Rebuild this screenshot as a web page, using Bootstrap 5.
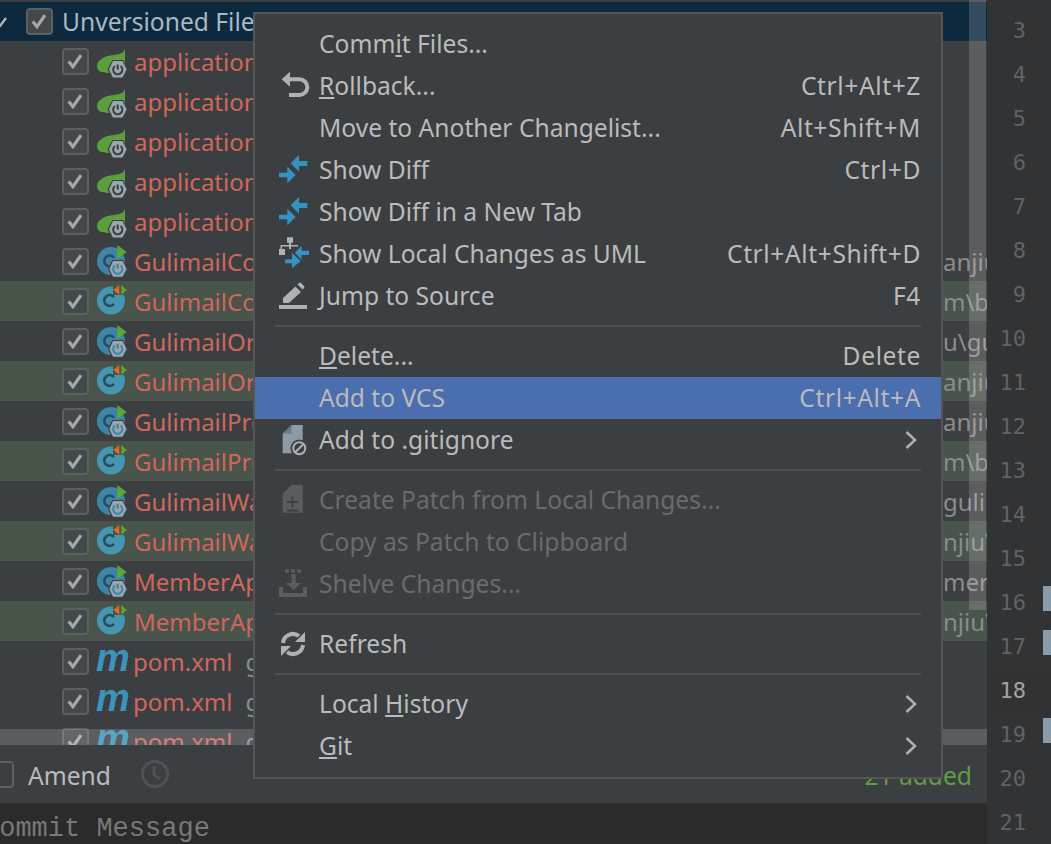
<!DOCTYPE html>
<html lang="en">
<head>
  <meta charset="UTF-8" />
  <meta name="viewport" content="width=device-width, initial-scale=1" />
  <title>Commit Changes</title>
  <link href="https://cdn.jsdelivr.net/npm/bootstrap@5.3.0/dist/css/bootstrap.min.css" rel="stylesheet" />
  <style>
    body { width: 1051px; height: 844px; overflow: hidden; background: #3c3f41; color: #bbb; font-family: "Noto Sans", sans-serif; font-size: 24px; }
    .ide { height: 844px; }
    .left-pane { width: 987px; }
    .tree { height: 745px; margin: 0; }
    .tree-head { height: 39px; margin-top: 2px; background: #0d293e; color: #a9b7c6; white-space: nowrap; font-size: 24.6px; }
    .tree-arrow { width: 8px; height: 39px; margin-right: 18px; flex: none; }
    .head-label { width: 192px; margin-left: 9px; overflow: hidden; padding-top: 1px; }
    .tree-row { height: 40px; padding-left: 62px; white-space: nowrap; }
    .tree-row.changed { background: #49544a; }
    .file-icon { width: 30px; height: 40px; margin: 0 7px 0 8px; flex: none; overflow: visible; }
    .file-name { color: #d1675a; padding-top: 2px; max-width: 120px; overflow: hidden; }
    .file-hint { color: #8c8c8c; margin-left: 13px; padding-top: 2px; width: 10px; overflow: hidden; }
    .file-path { color: #8c8c8c; position: absolute; left: 943px; width: 44px; overflow: hidden; padding-top: 2px; }
    .maven-m { width: 30px; margin: -6px 7px 0 7px; flex: none; color: #3a94bb; font: italic bold 38px/40px "Liberation Sans", sans-serif; }
    .form-check-input.ide-check { width: 27px; height: 27px; margin: 0; flex: none; background-color: #43494a; border: 2px solid #5e6060; border-radius: 4px; background-size: 100%; box-shadow: none;
      background-image: url("data:image/svg+xml,%3csvg xmlns='http://www.w3.org/2000/svg' viewBox='0 0 27 27'%3e%3cpath fill='none' stroke='%23a7a7a7' stroke-width='3.8' d='M5.500 13.500l5 6 9.500-13.500'/%3e%3c/svg%3e"); }
    .form-check-input.ide-check.blank { background-image: none; background-color: #3c3f41; margin-left: -13px; }
    .h-scroll { position: absolute; left: 0; top: 729px; width: 987px; height: 16px; background: rgba(255,255,255,.16); }
    .v-scroll { position: absolute; left: 969px; top: 0; width: 17px; height: 610px; background: rgba(255,255,255,.16); }
    .amend-row { height: 58px; font-size: 24.6px; }
    .amend-label { margin-left: 14px; padding-top: 4px; }
    .added-count { color: #5f9e45; margin-right: 15px; padding-top: 4px; }
    .clock-icon { width: 30px; height: 30px; margin-left: 29px; }
    .msg-box { flex: 1; background: #2b2b2b; border-top: 1px solid #323232; color: #787878; font: 27px/50px "Liberation Mono", monospace; white-space: nowrap; overflow: hidden; }
    .msg-box span { margin-left: -17px; display: block; }
    .gutter { width: 64px; background: #313335; padding-top: 9px; color: #606366; font: 22px/44px "DejaVu Sans Mono", monospace; }
    .gutter-line { height: 44px; padding-right: 25px; position: relative; text-align: right; }
    .gutter-line.current { background: #323232; color: #a4a3a3; }
    .gutter-line.modified::after { content: ""; position: absolute; right: 0; top: 5px; width: 8px; height: 25px; background: #8b9ba8; }
    .ctx-menu.dropdown-menu { position: absolute; left: 253px; top: 12px; width: 690px; height: 767px; margin: 0; padding: 9px 0; background: #3c3f41; border: 2px solid #555; border-radius: 0; font-size: 24.6px; }
    .ctx-menu .dropdown-item { height: 42px; padding: 0 20px 0 23px; color: #bbb; display: flex; align-items: center; }
    .ctx-menu .dropdown-item.active { background: #4b6eaf; color: #bbb; }
    .ctx-menu .dropdown-item.disabled { color: #696b6d; }
    .ctx-menu .dropdown-divider { margin: 8px 20px 8px 20px; border-top: 2px solid #515151; opacity: 1; }
    .menu-icon { width: 30px; height: 30px; margin-right: 11px; flex: none; overflow: visible; }
    .menu-gap { width: 30px; margin-right: 11px; flex: none; }
    .menu-key { margin-left: auto; letter-spacing: .6px; }
    .menu-sub { margin-left: auto; width: 12px; height: 20px; margin-right: 4px; }
  </style>
</head>
<body>

<svg width="0" height="0" class="position-absolute">
  <defs>
    <symbol id="spring" viewBox="0 0 30 40">
      <path fill="#5a9e3f" d="M28 8c-1 4-6 5-11 6C7 15 0 19 0 25c0 4 3 6 6 6 2 1 6 1 8 1l14-10z"/>
      <path fill="#3c3f41" d="M10.500 28.500L15.300 19h11l4.700 9.500-4.700 9.500h-11z"/>
      <path fill="#9aa7b0" d="M12 28.500L16 20h9.500l4.200 8.500-4.200 8h-9.500z"/>
      <path fill="none" stroke="#3c3f41" stroke-width="2" d="M18 25a4.600 4.600 0 1 0 5.500 0M20.700 23.500v5"/>
    </symbol>
    <symbol id="runnable" viewBox="0 0 30 40">
      <circle cx="14" cy="20" r="14" fill="#3d86a6"/>
      <path fill="none" stroke="#2b4a5c" stroke-width="2.500" d="M17 16.500a5.500 5.500 0 1 0 0 7"/>
      <path fill="#59a832" d="M20.300 4l9.400 7-9.400 7z"/>
      <path fill="#3c3f41" d="M11 28L15.300 19h11l4.300 9-4.300 8.700h-11z"/>
      <path fill="#9aa7b0" d="M12.300 28L16 20h9.500l4.200 8-4.200 7.700H16z"/>
      <path fill="none" stroke="#3d86a6" stroke-width="2" d="M18 24.500a4.600 4.600 0 1 0 5.500 0M20.700 23v5"/>
    </symbol>
    <symbol id="changedclass" viewBox="0 0 30 40">
      <circle cx="14" cy="19.500" r="14" fill="#4596ae"/>
      <path fill="none" stroke="#2b4a5c" stroke-width="2.500" d="M17 16a5.500 5.500 0 1 0 0 7"/>
      <path fill="#49544a" d="M16 2h14v12H16z"/>
      <path fill="#e0662a" d="M16.300 9l6-5v10z"/>
      <path fill="#59a832" d="M24.300 4l5.400 5-5.400 5z"/>
    </symbol>
    <symbol id="diff" viewBox="0 0 30 30">
      <path fill="#3592c4" d="M12.700 8.300L21 0v6h8.300v5H21v5.700zM17.700 20l-8.400-8.300v6H1v4.600h8.300v6z"/>
    </symbol>
  </defs>
</svg>

<div class="ide d-flex position-relative">
  <div class="left-pane d-flex flex-column">
    <div class="tree overflow-hidden">
      <div class="tree-head d-flex align-items-center">
        <svg class="tree-arrow" viewBox="0 0 8 39"><path fill="none" stroke="#afb1b3" stroke-width="2.500" d="M-3 24l3 0 6-8"/></svg>
        <input class="form-check-input ide-check" type="checkbox" checked />
        <span class="head-label">Unversioned File</span>
      </div>
      <div class="tree-row d-flex align-items-center"><input class="form-check-input ide-check" type="checkbox" checked /><svg class="file-icon"><use href="#spring"/></svg><span class="file-name">application</span></div>
      <div class="tree-row d-flex align-items-center"><input class="form-check-input ide-check" type="checkbox" checked /><svg class="file-icon"><use href="#spring"/></svg><span class="file-name">application</span></div>
      <div class="tree-row d-flex align-items-center"><input class="form-check-input ide-check" type="checkbox" checked /><svg class="file-icon"><use href="#spring"/></svg><span class="file-name">application</span></div>
      <div class="tree-row d-flex align-items-center"><input class="form-check-input ide-check" type="checkbox" checked /><svg class="file-icon"><use href="#spring"/></svg><span class="file-name">application</span></div>
      <div class="tree-row d-flex align-items-center"><input class="form-check-input ide-check" type="checkbox" checked /><svg class="file-icon"><use href="#spring"/></svg><span class="file-name">application</span></div>
      <div class="tree-row d-flex align-items-center"><input class="form-check-input ide-check" type="checkbox" checked /><svg class="file-icon"><use href="#runnable"/></svg><span class="file-name">GulimailCo</span><span class="file-path">anjiu</span></div>
      <div class="tree-row changed d-flex align-items-center"><input class="form-check-input ide-check" type="checkbox" checked /><svg class="file-icon"><use href="#changedclass"/></svg><span class="file-name">GulimailCo</span><span class="file-path">m\b</span></div>
      <div class="tree-row d-flex align-items-center"><input class="form-check-input ide-check" type="checkbox" checked /><svg class="file-icon"><use href="#runnable"/></svg><span class="file-name">GulimailOr</span><span class="file-path">u\gu</span></div>
      <div class="tree-row changed d-flex align-items-center"><input class="form-check-input ide-check" type="checkbox" checked /><svg class="file-icon"><use href="#changedclass"/></svg><span class="file-name">GulimailOr</span><span class="file-path">anjiu</span></div>
      <div class="tree-row d-flex align-items-center"><input class="form-check-input ide-check" type="checkbox" checked /><svg class="file-icon"><use href="#runnable"/></svg><span class="file-name">GulimailPro</span><span class="file-path">anjiu</span></div>
      <div class="tree-row changed d-flex align-items-center"><input class="form-check-input ide-check" type="checkbox" checked /><svg class="file-icon"><use href="#changedclass"/></svg><span class="file-name">GulimailPro</span><span class="file-path">m\b</span></div>
      <div class="tree-row d-flex align-items-center"><input class="form-check-input ide-check" type="checkbox" checked /><svg class="file-icon"><use href="#runnable"/></svg><span class="file-name">GulimailWa</span><span class="file-path">guli</span></div>
      <div class="tree-row changed d-flex align-items-center"><input class="form-check-input ide-check" type="checkbox" checked /><svg class="file-icon"><use href="#changedclass"/></svg><span class="file-name">GulimailWa</span><span class="file-path">njiu\</span></div>
      <div class="tree-row d-flex align-items-center"><input class="form-check-input ide-check" type="checkbox" checked /><svg class="file-icon"><use href="#runnable"/></svg><span class="file-name">MemberAp</span><span class="file-path">mer</span></div>
      <div class="tree-row changed d-flex align-items-center"><input class="form-check-input ide-check" type="checkbox" checked /><svg class="file-icon"><use href="#changedclass"/></svg><span class="file-name">MemberAp</span><span class="file-path">njiu\</span></div>
      <div class="tree-row d-flex align-items-center"><input class="form-check-input ide-check" type="checkbox" checked /><span class="maven-m">m</span><span class="file-name">pom.xml</span><span class="file-hint">g</span></div>
      <div class="tree-row d-flex align-items-center"><input class="form-check-input ide-check" type="checkbox" checked /><span class="maven-m">m</span><span class="file-name">pom.xml</span><span class="file-hint">g</span></div>
      <div class="tree-row d-flex align-items-center"><input class="form-check-input ide-check" type="checkbox" checked /><span class="maven-m">m</span><span class="file-name">pom.xml</span><span class="file-hint">g</span></div>
    </div>
    <div class="amend-row d-flex align-items-center">
      <input class="form-check-input ide-check blank" type="checkbox" />
      <span class="amend-label">Amend</span>
      <svg class="clock-icon" viewBox="0 0 30 30"><circle cx="15" cy="15" r="12.500" fill="none" stroke="#4f5254" stroke-width="3"/><path fill="none" stroke="#4f5254" stroke-width="3" d="M14 7v9l6 4"/></svg>
      <span class="added-count ms-auto">21 added</span>
    </div>
    <div class="msg-box"><span>Commit Message</span></div>
  </div>

  <div class="gutter">
    <div class="gutter-line">3</div>
    <div class="gutter-line">4</div>
    <div class="gutter-line">5</div>
    <div class="gutter-line">6</div>
    <div class="gutter-line">7</div>
    <div class="gutter-line">8</div>
    <div class="gutter-line">9</div>
    <div class="gutter-line">10</div>
    <div class="gutter-line">11</div>
    <div class="gutter-line">12</div>
    <div class="gutter-line">13</div>
    <div class="gutter-line">14</div>
    <div class="gutter-line">15</div>
    <div class="gutter-line modified">16</div>
    <div class="gutter-line modified">17</div>
    <div class="gutter-line current">18</div>
    <div class="gutter-line modified">19</div>
    <div class="gutter-line">20</div>
    <div class="gutter-line">21</div>
  </div>

  <div class="v-scroll"></div>
  <div class="h-scroll"></div>

  <ul class="dropdown-menu show ctx-menu">
    <li><a class="dropdown-item"><span class="menu-gap"></span><span>Comm<u>i</u>t Files...</span></a></li>
    <li><a class="dropdown-item"><svg class="menu-icon" viewBox="0 0 30 30"><path fill="#afb1b3" d="M3.700 8.300L12 .7v15z"/><path fill="none" stroke="#afb1b3" stroke-width="4" d="M11 8.300h10.500a7.800 7.800 0 0 1 0 15.700H11"/></svg><span><u>R</u>ollback...</span><span class="menu-key">Ctrl+Alt+Z</span></a></li>
    <li><a class="dropdown-item"><span class="menu-gap"></span><span>Move to Another Changelist...</span><span class="menu-key">Alt+Shift+M</span></a></li>
    <li><a class="dropdown-item"><svg class="menu-icon"><use href="#diff"/></svg><span>Show Diff</span><span class="menu-key">Ctrl+D</span></a></li>
    <li><a class="dropdown-item"><svg class="menu-icon"><use href="#diff"/></svg><span>Show Diff in a New Tab</span></a></li>
    <li><a class="dropdown-item"><svg class="menu-icon" viewBox="0 0 30 30"><path fill="#afb1b3" d="M9-1.700h6v5.400h-2V6h7v1.500h-7V10h-2V7.500H4V10h3v6H1v-6h1.500V6H11V3.700H9z"/><path fill="#3592c4" d="M17 13.700l6.500-7v5H31V16h-7.500v5zM22.700 22L14 13.700v6.600H7v4h7v5z"/></svg><span>Show Local Changes as UML</span><span class="menu-key">Ctrl+Alt+Shift+D</span></a></li>
    <li><a class="dropdown-item"><svg class="menu-icon" viewBox="0 0 30 30"><path fill="#afb1b3" d="M1 24h28v4H1zM5 22v-5L17.500 5.500l5.500 5.500L11 22zM19.500 3.500l1.500-1.500q1-1 2 0l3 3q1 1 0 2l-1.500 1.500z"/></svg><span><u>J</u>ump to Source</span><span class="menu-key">F4</span></a></li>
    <li><hr class="dropdown-divider" /></li>
    <li><a class="dropdown-item"><span class="menu-gap"></span><span><u>D</u>elete...</span><span class="menu-key">Delete</span></a></li>
    <li><a class="dropdown-item active"><span class="menu-gap"></span><span>Add to VCS</span><span class="menu-key">Ctrl+Alt+A</span></a></li>
    <li><a class="dropdown-item"><svg class="menu-icon" viewBox="0 0 30 30"><path fill="#8b9ba7" d="M4.700 8.500L13.500 0h11.200v28.300H4.700z"/><path fill="#3c3f41" d="M4.700 8.500H13.500V0z" opacity=".35"/><circle cx="21.300" cy="23.300" r="8.800" fill="#3c3f41"/><circle cx="21.300" cy="23.300" r="6" fill="none" stroke="#afb1b3" stroke-width="2"/><path stroke="#afb1b3" stroke-width="2" d="M17 27.500l8.500-8.500"/></svg><span>Add to .gitignore</span><svg class="menu-sub" viewBox="0 0 12 20"><path fill="none" stroke="#afb1b3" stroke-width="2.500" d="M1.500 2l8.500 8-8.500 8"/></svg></a></li>
    <li><hr class="dropdown-divider" /></li>
    <li><a class="dropdown-item disabled"><svg class="menu-icon" viewBox="0 0 30 30"><path fill="#5a5d5f" d="M4.700 8.500L13.500 0h11.200v27.700H4.700z"/><path stroke="#3c3f41" stroke-width="2" d="M9 17h11M14.500 11.500v11M9 25.500h11"/></svg><span>Create Patch from Local Changes...</span></a></li>
    <li><a class="dropdown-item disabled"><span class="menu-gap"></span><span>Copy as Patch to Clipboard</span></a></li>
    <li><a class="dropdown-item disabled"><svg class="menu-icon" viewBox="0 0 30 30"><path fill="#5a5d5f" d="M7 .3h4v3.400H7zM13 .3h4v3.400h-4zM19 .3h4v3.400h-4zM13.700 5h4v9h5.300l-7.300 7-7.700-7h5.700zM1 18h4v6h20v-6h4v10H1z"/></svg><span>Shelve Changes...</span></a></li>
    <li><hr class="dropdown-divider" /></li>
    <li><a class="dropdown-item"><svg class="menu-icon" viewBox="0 0 30 30"><g fill="#afb1b3"><path fill="none" stroke="#afb1b3" stroke-width="4" d="M5 14A10 10 0 0 1 21 7"/><path d="M27 3v10H17z"/><g transform="rotate(180 15 15)"><path fill="none" stroke="#afb1b3" stroke-width="4" d="M5 14A10 10 0 0 1 21 7"/><path d="M27 3v10H17z"/></g></g></svg><span>Refresh</span></a></li>
    <li><hr class="dropdown-divider" /></li>
    <li><a class="dropdown-item"><span class="menu-gap"></span><span>Local <u>H</u>istory</span><svg class="menu-sub" viewBox="0 0 12 20"><path fill="none" stroke="#afb1b3" stroke-width="2.500" d="M1.500 2l8.500 8-8.500 8"/></svg></a></li>
    <li><a class="dropdown-item"><span class="menu-gap"></span><span><u>G</u>it</span><svg class="menu-sub" viewBox="0 0 12 20"><path fill="none" stroke="#afb1b3" stroke-width="2.500" d="M1.500 2l8.500 8-8.500 8"/></svg></a></li>
  </ul>
</div>

<script src="https://cdn.jsdelivr.net/npm/bootstrap@5.3.0/dist/js/bootstrap.bundle.min.js"></script>
</body>
</html>
